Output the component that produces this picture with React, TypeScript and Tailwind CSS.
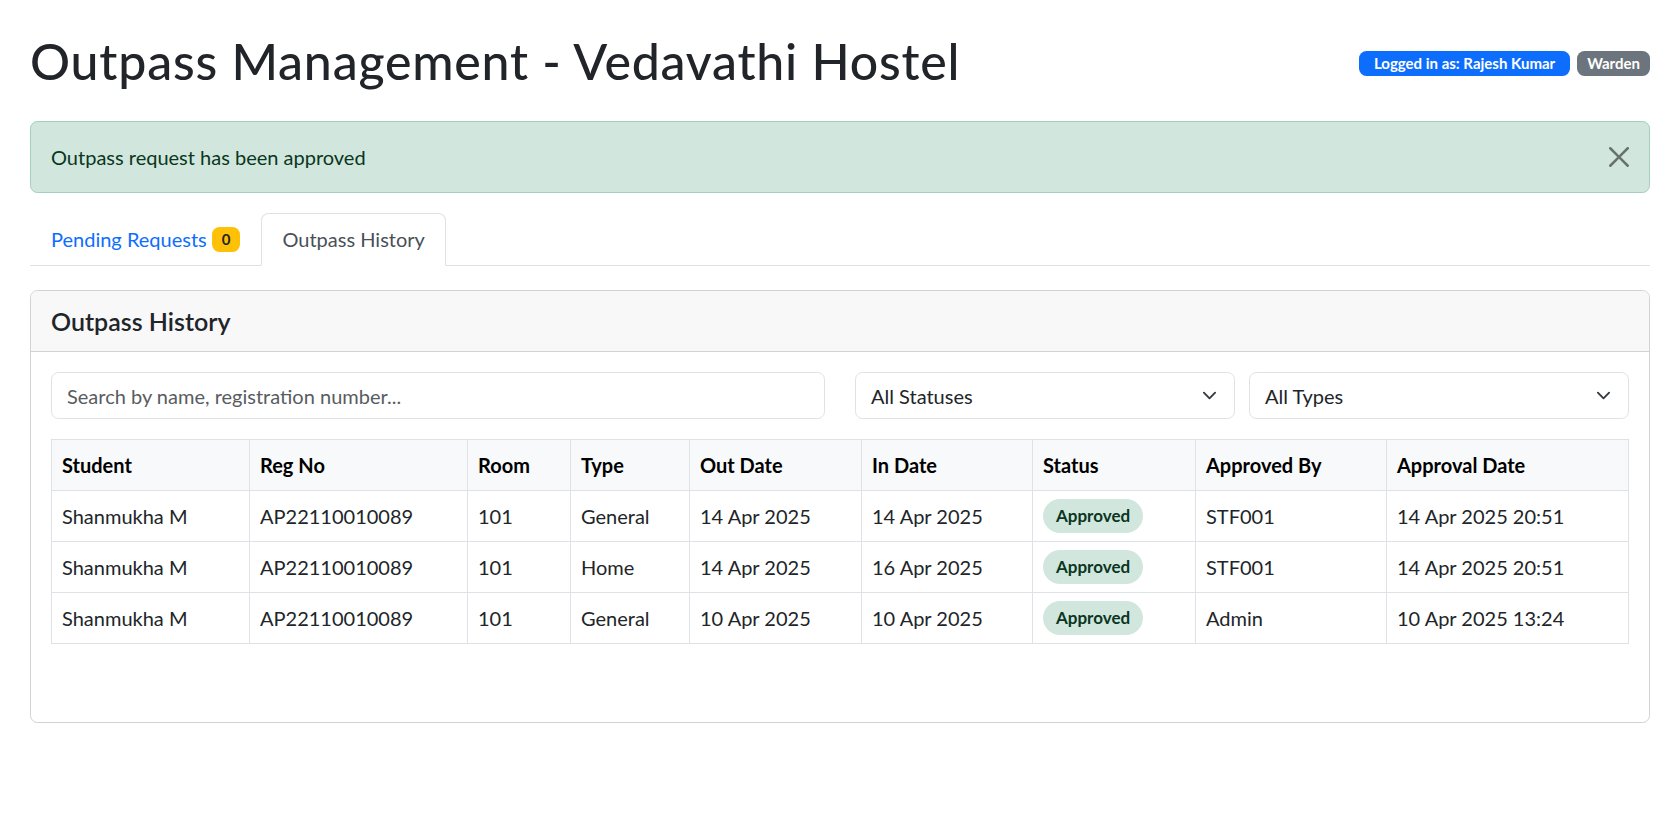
import React from 'react';

type HistoryRow = {
    student: string;
    regNo: string;
    room: string;
    type: string;
    outDate: string;
    inDate: string;
    status: string;
    approvedBy: string;
    approvalDate: string;
};

const rows: HistoryRow[] = [
    { student: 'Shanmukha M', regNo: 'AP22110010089', room: '101', type: 'General', outDate: '14 Apr 2025', inDate: '14 Apr 2025', status: 'Approved', approvedBy: 'STF001', approvalDate: '14 Apr 2025 20:51' },
    { student: 'Shanmukha M', regNo: 'AP22110010089', room: '101', type: 'Home', outDate: '14 Apr 2025', inDate: '16 Apr 2025', status: 'Approved', approvedBy: 'STF001', approvalDate: '14 Apr 2025 20:51' },
    { student: 'Shanmukha M', regNo: 'AP22110010089', room: '101', type: 'General', outDate: '10 Apr 2025', inDate: '10 Apr 2025', status: 'Approved', approvedBy: 'Admin', approvalDate: '10 Apr 2025 13:24' },
];

// fixed column widths so the grid lines land where the screenshot has them
const columns = [
    { label: 'Student', width: 'w-[198px]' },
    { label: 'Reg No', width: 'w-[218px]' },
    { label: 'Room', width: 'w-[103px]' },
    { label: 'Type', width: 'w-[119px]' },
    { label: 'Out Date', width: 'w-[172px]' },
    { label: 'In Date', width: 'w-[171px]' },
    { label: 'Status', width: 'w-[163px]' },
    { label: 'Approved By', width: 'w-[191px]' },
    { label: 'Approval Date', width: '' },
];

const Chevron = () => (
    <svg width="15" height="15" viewBox="0 0 16 16" fill="none">
        <path d="m2 5 6 6 6-6" stroke="#343a40" strokeWidth="2" strokeLinecap="round" strokeLinejoin="round" />
    </svg>
);

const FakeSelect: React.FC<{ label: string; className?: string }> = ({ label, className }) => (
    <div className={`flex items-center justify-between h-[47px] border border-[#dee2e6] rounded-[7.5px] pl-[15px] pr-[17px] bg-white text-[#212529] ${className ?? ''}`}>
        <span>{label}</span>
        <Chevron />
    </div>
);

export default function App() {
    return (
        <div className="bg-white pl-[30px] pr-[20px] pt-[31px] pb-[40px] text-[20px] leading-[30px] text-[#212529] font-['Lato','Segoe_UI',sans-serif]">
            {/* Header */}
            <div className="flex items-center justify-between h-[60px]">
                <h1 className="text-[50px] leading-[60px] font-medium tracking-[0.8px] text-[#212529]">Outpass Management - Vedavathi Hostel</h1>
                <div className="flex items-center gap-[7px] mt-[5px]">
                    <span className="inline-block rounded-[7.5px] bg-[#0d6efd] text-white text-[15px] font-bold leading-[15px] px-[15px] py-[5px]">Logged in as: Rajesh Kumar</span>
                    <span className="inline-block rounded-[7.5px] bg-[#6c757d] text-white text-[15px] font-bold leading-[15px] px-[10px] py-[5px]">Warden</span>
                </div>
            </div>

            {/* Success alert */}
            <div className="mt-[30px] flex items-center justify-between border border-[#a3cfbb] bg-[#d1e7dd] text-[#0a3622] rounded-[7.5px] px-[20px] py-[20px]">
                <span>Outpass request has been approved</span>
                <svg width="20" height="20" viewBox="0 0 16 16" className="opacity-50">
                    <path fill="#000" d="M.293.293a1 1 0 0 1 1.414 0L8 6.586 14.293.293a1 1 0 1 1 1.414 1.414L9.414 8l6.293 6.293a1 1 0 0 1-1.414 1.414L8 9.414l-6.293 6.293a1 1 0 0 1-1.414-1.414L6.586 8 .293 1.707a1 1 0 0 1 0-1.414" />
                </svg>
            </div>

            {/* Tabs */}
            <div className="mt-[20px] flex border-b border-[#dee2e6]">
                <div className="flex items-center px-[20px] py-[10px] border border-transparent text-[#0d6efd]">
                    Pending Requests
                    <span className="ml-[5px] inline-block rounded-[7.5px] bg-[#ffc107] text-[#212529] text-[15px] font-bold leading-[15px] px-[10px] py-[5px]">0</span>
                </div>
                <div className="px-[20px] py-[10px] border border-[#dee2e6] border-b-white rounded-t-[7.5px] bg-white -mb-px text-[#495057]">
                    Outpass History
                </div>
            </div>

            {/* History card */}
            <div className="mt-[24px] border border-[#d2d2d2] rounded-[7.5px] overflow-hidden">
                <div className="bg-[#f8f8f9] border-b border-[#d2d2d2] px-[20px] py-[15px]">
                    <h5 className="text-[25px] leading-[30px] font-semibold text-[#212529]">Outpass History</h5>
                </div>
                <div className="px-[20px] pt-[20px] pb-[78px]">
                    <div className="flex items-center">
                        <input
                            type="text"
                            placeholder="Search by name, registration number..."
                            className="w-[774px] h-[47px] border border-[#dee2e6] rounded-[7.5px] px-[15px] outline-none placeholder:text-[#595c5f]"
                        />
                        <FakeSelect label="All Statuses" className="ml-[30px] flex-1" />
                        <FakeSelect label="All Types" className="ml-[14px] flex-1" />
                    </div>

                    <table className="mt-[20px] w-full table-fixed border-collapse">
                        <thead>
                            <tr className="bg-[#f8f9fa]">
                                {columns.map((c) => (
                                    <th key={c.label} className={`${c.width} border border-[#dee2e6] px-[10px] py-[10px] text-left font-bold text-black`}>
                                        {c.label}
                                    </th>
                                ))}
                            </tr>
                        </thead>
                        <tbody>
                            {rows.map((r, i) => (
                                <tr key={i}>
                                    <td className="border border-[#dee2e6] px-[10px] py-[10px]">{r.student}</td>
                                    <td className="border border-[#dee2e6] px-[10px] py-[10px]">{r.regNo}</td>
                                    <td className="border border-[#dee2e6] px-[10px] py-[10px]">{r.room}</td>
                                    <td className="border border-[#dee2e6] px-[10px] py-[10px]">{r.type}</td>
                                    <td className="border border-[#dee2e6] px-[10px] py-[10px]">{r.outDate}</td>
                                    <td className="border border-[#dee2e6] px-[10px] py-[10px]">{r.inDate}</td>
                                    <td className="border border-[#dee2e6] px-[10px] py-[8px]">
                                        <div className="flex items-center h-[34px]">
                                            <span className="inline-flex items-center h-[34px] px-[13px] rounded-full bg-[#d1e7dd] text-[#0a3622] text-[17px] font-bold">
                                                {r.status}
                                            </span>
                                        </div>
                                    </td>
                                    <td className="border border-[#dee2e6] px-[10px] py-[10px]">{r.approvedBy}</td>
                                    <td className="border border-[#dee2e6] px-[10px] py-[10px]">{r.approvalDate}</td>
                                </tr>
                            ))}
                        </tbody>
                    </table>
                </div>
            </div>
        </div>
    );
}
